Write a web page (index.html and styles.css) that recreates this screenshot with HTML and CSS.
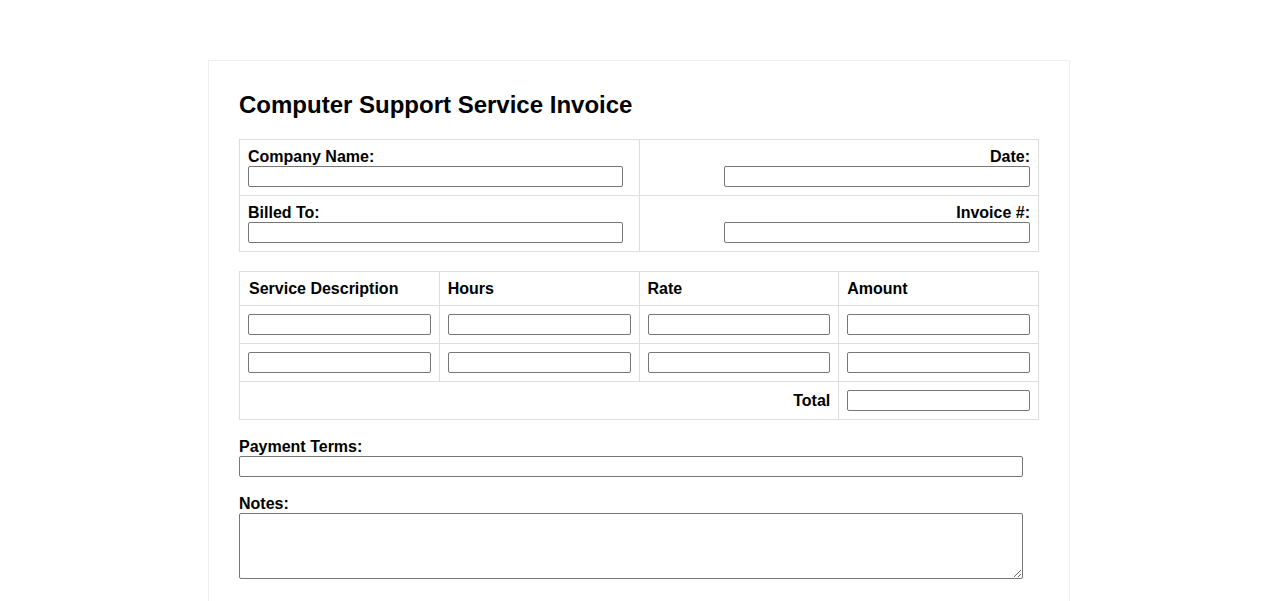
FILE: index.html
```html
<!DOCTYPE html>
<html>
<head>
<meta charset="utf-8">
<title>Computer Support Service Invoice</title>
<link rel="stylesheet" href="styles.css">
</head>
<body>
<div class="invoice">
  <h2 class="title">Computer Support Service Invoice</h2>
  <table class="info">
    <tr>
      <td class="cell-left"><label class="lbl">Company Name:</label><input class="in-left" type="text"></td>
      <td class="cell-right"><label class="lbl">Date:</label><input class="in-right" type="text"></td>
    </tr>
    <tr>
      <td class="cell-left"><label class="lbl">Billed To:</label><input class="in-left" type="text"></td>
      <td class="cell-right"><label class="lbl">Invoice #:</label><input class="in-right" type="text"></td>
    </tr>
  </table>
  <table class="items">
    <tr>
      <th>Service Description</th>
      <th>Hours</th>
      <th>Rate</th>
      <th>Amount</th>
    </tr>
    <tr>
      <td><input class="in-cell" type="text"></td>
      <td><input class="in-cell" type="text"></td>
      <td><input class="in-cell" type="text"></td>
      <td><input class="in-cell" type="text"></td>
    </tr>
    <tr>
      <td><input class="in-cell" type="text"></td>
      <td><input class="in-cell" type="text"></td>
      <td><input class="in-cell" type="text"></td>
      <td><input class="in-cell" type="text"></td>
    </tr>
    <tr>
      <td class="total-label" colspan="3">Total</td>
      <td><input class="in-cell" type="text"></td>
    </tr>
  </table>
  <div class="field">
    <label class="lbl">Payment Terms:</label>
    <input class="in-wide" type="text">
  </div>
  <div class="field">
    <label class="lbl">Notes:</label>
    <textarea class="notes"></textarea>
  </div>
</div>
</body>
</html>
```

FILE: styles.css
```css
html, body {
  margin: 0;
  padding: 0;
  background: #fff;
}

body {
  font-family: "Liberation Sans", Arial, sans-serif;
  color: #000;
}

.invoice {
  width: 800px;
  margin: 60px auto 0;
  padding: 30px;
  border: 1px solid #eeeeee;
}

.title {
  margin: 0 0 20px;
  font-size: 24px;
  font-weight: bold;
  line-height: 28px;
}

table {
  width: 100%;
  border-collapse: collapse;
  table-layout: fixed;
}

.info {
  margin-bottom: 19px;
}

.items {
  margin-bottom: 18px;
}

td, th {
  border: 1px solid #dddddd;
  padding: 8px;
  font-size: 16px;
  line-height: 18px;
}

.lbl {
  display: block;
  font-weight: bold;
  font-size: 16px;
  line-height: 18px;
}

input, textarea {
  box-sizing: border-box;
  font-family: "Liberation Sans", Arial, sans-serif;
  border: 1px solid #767676;
  border-radius: 2px;
  padding: 1px 2px;
  margin: 0;
  display: block;
}

input {
  height: 21px;
}

.cell-left {
  text-align: left;
}

.cell-right {
  text-align: right;
}

.in-left {
  width: 375px;
}

.in-right {
  width: 306px;
  margin-left: auto;
}

.items th {
  text-align: left;
  font-weight: bold;
  line-height: 17px;
}

.items th:first-child {
  padding-left: 9px;
}

.in-cell {
  width: 100%;
}

.total-label {
  text-align: right;
  font-weight: bold;
}

.field {
  margin-bottom: 18px;
}

.in-wide {
  width: 784px;
}

.notes {
  width: 784px;
  height: 66px;
  resize: vertical;
}
```
